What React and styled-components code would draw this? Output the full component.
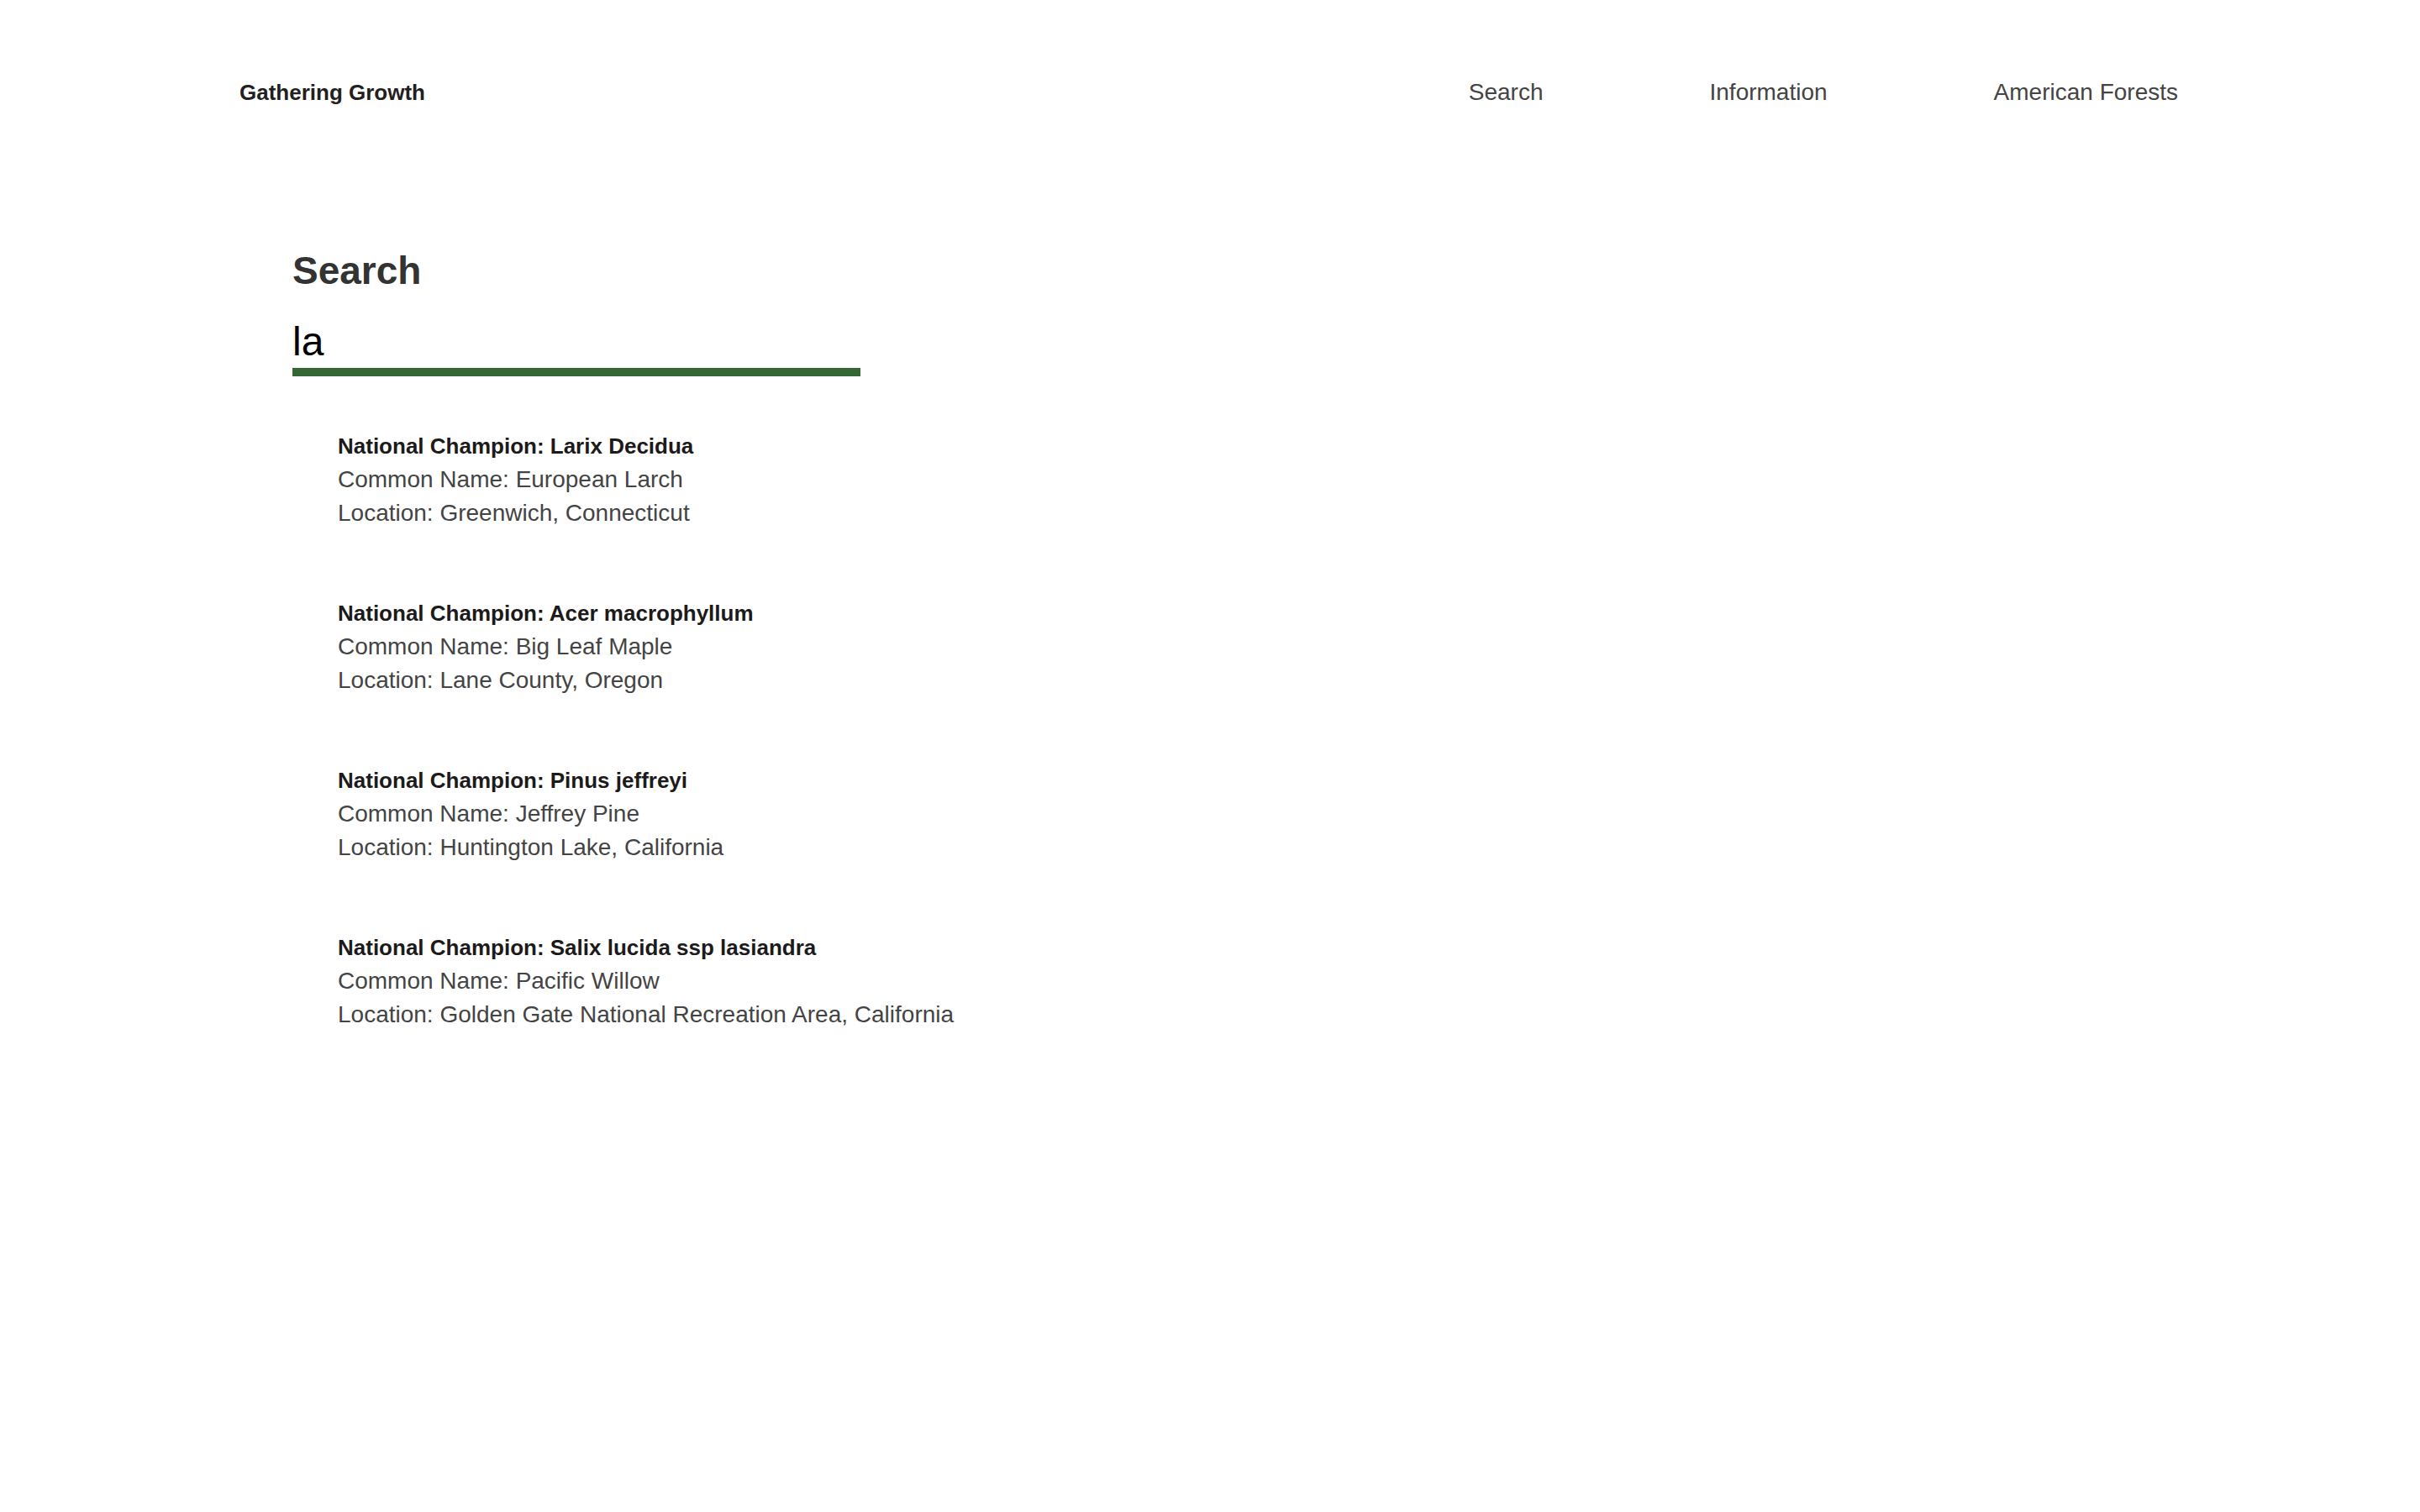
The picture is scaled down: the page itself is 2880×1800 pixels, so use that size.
import React from "react";
import styled, { createGlobalStyle } from "styled-components";

const GlobalStyle = createGlobalStyle`
  html, body {
    margin: 0;
    padding: 0;
    background: #ffffff;
    font-family: "Liberation Sans", Arial, sans-serif;
  }
  * { box-sizing: border-box; }
`;

const Page = styled.div`
  min-height: 1800px;
  background: #ffffff;
`;

const Header = styled.header`
  display: flex;
  align-items: center;
  justify-content: space-between;
  padding: 88px 288px 0 285px;
  height: 132px;
`;

const Logo = styled.a`
  font-size: 26px;
  font-weight: 700;
  line-height: 44px;
  color: #231f20;
  text-decoration: none;
`;

const Nav = styled.nav`
  display: flex;
  align-items: center;
  gap: 198px;
`;

const NavLink = styled.a`
  font-size: 28px;
  line-height: 44px;
  color: #444444;
  text-decoration: none;
`;

const Main = styled.main`
  padding: 164px 0 0 348px;
`;

const Title = styled.h1`
  margin: 0;
  font-size: 46px;
  font-weight: 700;
  line-height: 52px;
  color: #333333;
`;

const SearchInput = styled.input`
  display: block;
  margin-top: 30px;
  width: 676px;
  height: 70px;
  padding: 0 0 4px 0;
  border: none;
  border-bottom: 10px solid #356635;
  outline: none;
  background: transparent;
  font-family: "Liberation Sans", Arial, sans-serif;
  font-size: 48px;
  line-height: 56px;
  color: #000000;
`;

const Results = styled.ul`
  list-style: none;
  margin: 63px 0 0 0;
  padding: 0 0 0 54px;
  display: flex;
  flex-direction: column;
  gap: 79px;
`;

const Result = styled.li`
  display: flex;
  flex-direction: column;
`;

const ResultName = styled.div`
  font-size: 26px;
  font-weight: 700;
  line-height: 40px;
  color: #1c1a1a;
`;

const ResultLine = styled.div`
  font-size: 28px;
  line-height: 40px;
  color: #444444;
`;

const champions = [
  { sci: "Larix Decidua", common: "European Larch", loc: "Greenwich, Connecticut" },
  { sci: "Acer macrophyllum", common: "Big Leaf Maple", loc: "Lane County, Oregon" },
  { sci: "Pinus jeffreyi", common: "Jeffrey Pine", loc: "Huntington Lake, California" },
  { sci: "Salix lucida ssp lasiandra", common: "Pacific Willow", loc: "Golden Gate National Recreation Area, California" },
];

export default function App() {
  return (
    <Page>
      <GlobalStyle />
      <Header>
        <Logo href="#">Gathering Growth</Logo>
        <Nav>
          <NavLink href="#">Search</NavLink>
          <NavLink href="#">Information</NavLink>
          <NavLink href="#">American Forests</NavLink>
        </Nav>
      </Header>
      <Main>
        <Title>Search</Title>
        <SearchInput type="text" defaultValue="la" aria-label="Search" />
        <Results>
          {champions.map((c) => (
            <Result key={c.sci}>
              <ResultName>National Champion: {c.sci}</ResultName>
              <ResultLine>Common Name: {c.common}</ResultLine>
              <ResultLine>Location: {c.loc}</ResultLine>
            </Result>
          ))}
        </Results>
      </Main>
    </Page>
  );
}
